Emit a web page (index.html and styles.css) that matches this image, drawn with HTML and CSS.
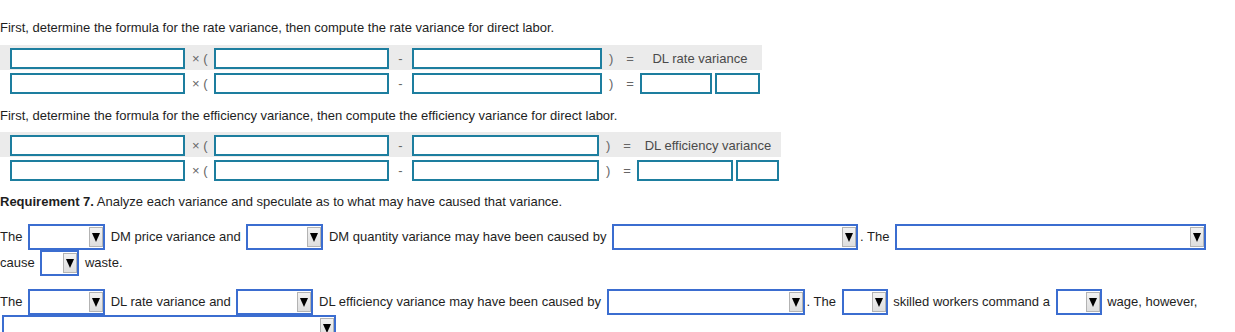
FILE: index.html
```html
<!DOCTYPE html>
<html>
<head>
<meta charset="utf-8">
<link rel="stylesheet" href="styles.css">
</head>
<body>
<p class="lead first">First, determine the formula for the rate variance, then compute the rate variance for direct labor.</p>
<div class="formula rate">
  <div class="frow shade">
    <input class="box w1" type="text"><span class="op times">× (</span><input class="box w1" type="text"><span class="op minus">-</span><input class="box w3" type="text"><span class="op paren">)</span><span class="op eq">=</span><span class="result res-rate"><span class="flabel">DL rate variance</span></span>
  </div>
  <div class="frow">
    <input class="box w1" type="text"><span class="op times">× (</span><input class="box w1" type="text"><span class="op minus">-</span><input class="box w3" type="text"><span class="op paren">)</span><span class="op eq">=</span><span class="result res-rate"><input class="box r-rate-a" type="text"><input class="box r-rate-b" type="text"></span>
  </div>
</div>
<p class="lead second">First, determine the formula for the efficiency variance, then compute the efficiency variance for direct labor.</p>
<div class="formula eff">
  <div class="frow shade">
    <input class="box w1" type="text"><span class="op times">× (</span><input class="box w1" type="text"><span class="op minus">-</span><input class="box w3e" type="text"><span class="op paren">)</span><span class="op eq">=</span><span class="result res-eff"><span class="flabel">DL efficiency variance</span></span>
  </div>
  <div class="frow">
    <input class="box w1" type="text"><span class="op times">× (</span><input class="box w1" type="text"><span class="op minus">-</span><input class="box w3e" type="text"><span class="op paren">)</span><span class="op eq">=</span><span class="result res-eff"><input class="box r-eff-a" type="text"><input class="box r-eff-b" type="text"></span>
  </div>
</div>
<p class="lead req"><b>Requirement 7.</b> Analyze each variance and speculate as to what may have caused that variance.</p>
<div class="para p1">
  <div class="line">The <span class="sel s77"><span class="btn"></span></span> DM price variance and <span class="sel s77"><span class="btn"></span></span> DM quantity variance may have been caused by <span class="sel s246"><span class="btn"></span></span>. The <span class="sel s311"><span class="btn"></span></span></div>
  <div class="line">cause <span class="sel s39"><span class="btn"></span></span> waste.</div>
</div>
<div class="para p2">
  <div class="line">The <span class="sel s77"><span class="btn"></span></span> DL rate variance and <span class="sel s77"><span class="btn"></span></span> DL efficiency variance may have been caused by <span class="sel s198"><span class="btn"></span></span>. The <span class="sel s46"><span class="btn"></span></span> skilled workers command a <span class="sel s46"><span class="btn"></span></span> wage, however,</div>
  <div class="line"><span class="sel s334 flush"><span class="btn"></span></span></div>
</div>
</body>
</html>
```

FILE: styles.css
```css
body {
  margin: 0;
  font-family: "Liberation Sans", Arial, sans-serif;
  font-size: 13px;
  color: #1e1e1e;
}

.lead {
  margin: 0;
  line-height: 14px;
}
.lead.first { margin-top: 21px; }
.lead.second { margin-top: 14px; }
.lead.req { margin-top: 13px; }

.formula {
  width: fit-content;
}
.formula.rate { margin-top: 10px; }
.formula.eff { margin-top: 9px; }

.frow {
  display: flex;
  align-items: center;
  height: 25px;
  box-sizing: border-box;
  padding: 3px 2px 1px 10px;
}
.frow > * { flex-shrink: 0; }
.shade { background: #ebebeb; }

.box {
  box-sizing: border-box;
  height: 21px;
  margin: 0;
  padding: 0;
  border: 2px solid #1d7e9f;
  background: #fff;
  font: inherit;
}
.w1 { width: 175px; }
.w3 { width: 190px; }
.w3e { width: 187px; }

.op {
  color: #666;
  line-height: 21px;
}
.times {
  width: 29px;
  box-sizing: border-box;
  padding-left: 7px;
}
.minus {
  width: 23px;
  text-align: center;
}
.paren { margin-left: 7px; }
.eq { margin-left: 13px; }

.result {
  margin-left: 6px;
  display: flex;
  justify-content: center;
  gap: 3px;
}
.res-rate { width: 120px; }
.res-eff { width: 142px; }
.flabel {
  color: #4a4a4a;
  line-height: 21px;
  white-space: nowrap;
}
.r-rate-a { width: 72px; }
.r-rate-b { width: 45px; }
.r-eff-a { width: 96px; }
.r-eff-b { width: 43px; }

.para.p1 { margin-top: 15px; }
.para.p2 { margin-top: 13px; }

.line {
  height: 26px;
  line-height: 26px;
  white-space: nowrap;
}

.sel {
  display: inline-flex;
  justify-content: flex-end;
  align-items: center;
  vertical-align: top;
  box-sizing: border-box;
  height: 26px;
  margin: 0 2px;
  border: 2px solid #3b6dd0;
  background: #fff;
}
.sel.flush { margin-left: 2px; }
.s39 { width: 39px; }
.s46 { width: 46px; }
.s77 { width: 77px; }
.s198 { width: 198px; }
.s246 { width: 246px; }
.s311 { width: 311px; }
.s334 { width: 334px; }

.btn {
  display: flex;
  align-items: center;
  justify-content: center;
  box-sizing: border-box;
  width: 14px;
  height: 20px;
  background: linear-gradient(#f2f2f2, #dedede);
  border: 1px solid #b3b3b3;
}
.btn::after {
  content: "";
  border-left: 4px solid transparent;
  border-right: 4px solid transparent;
  border-top: 9px solid #000;
}
```
